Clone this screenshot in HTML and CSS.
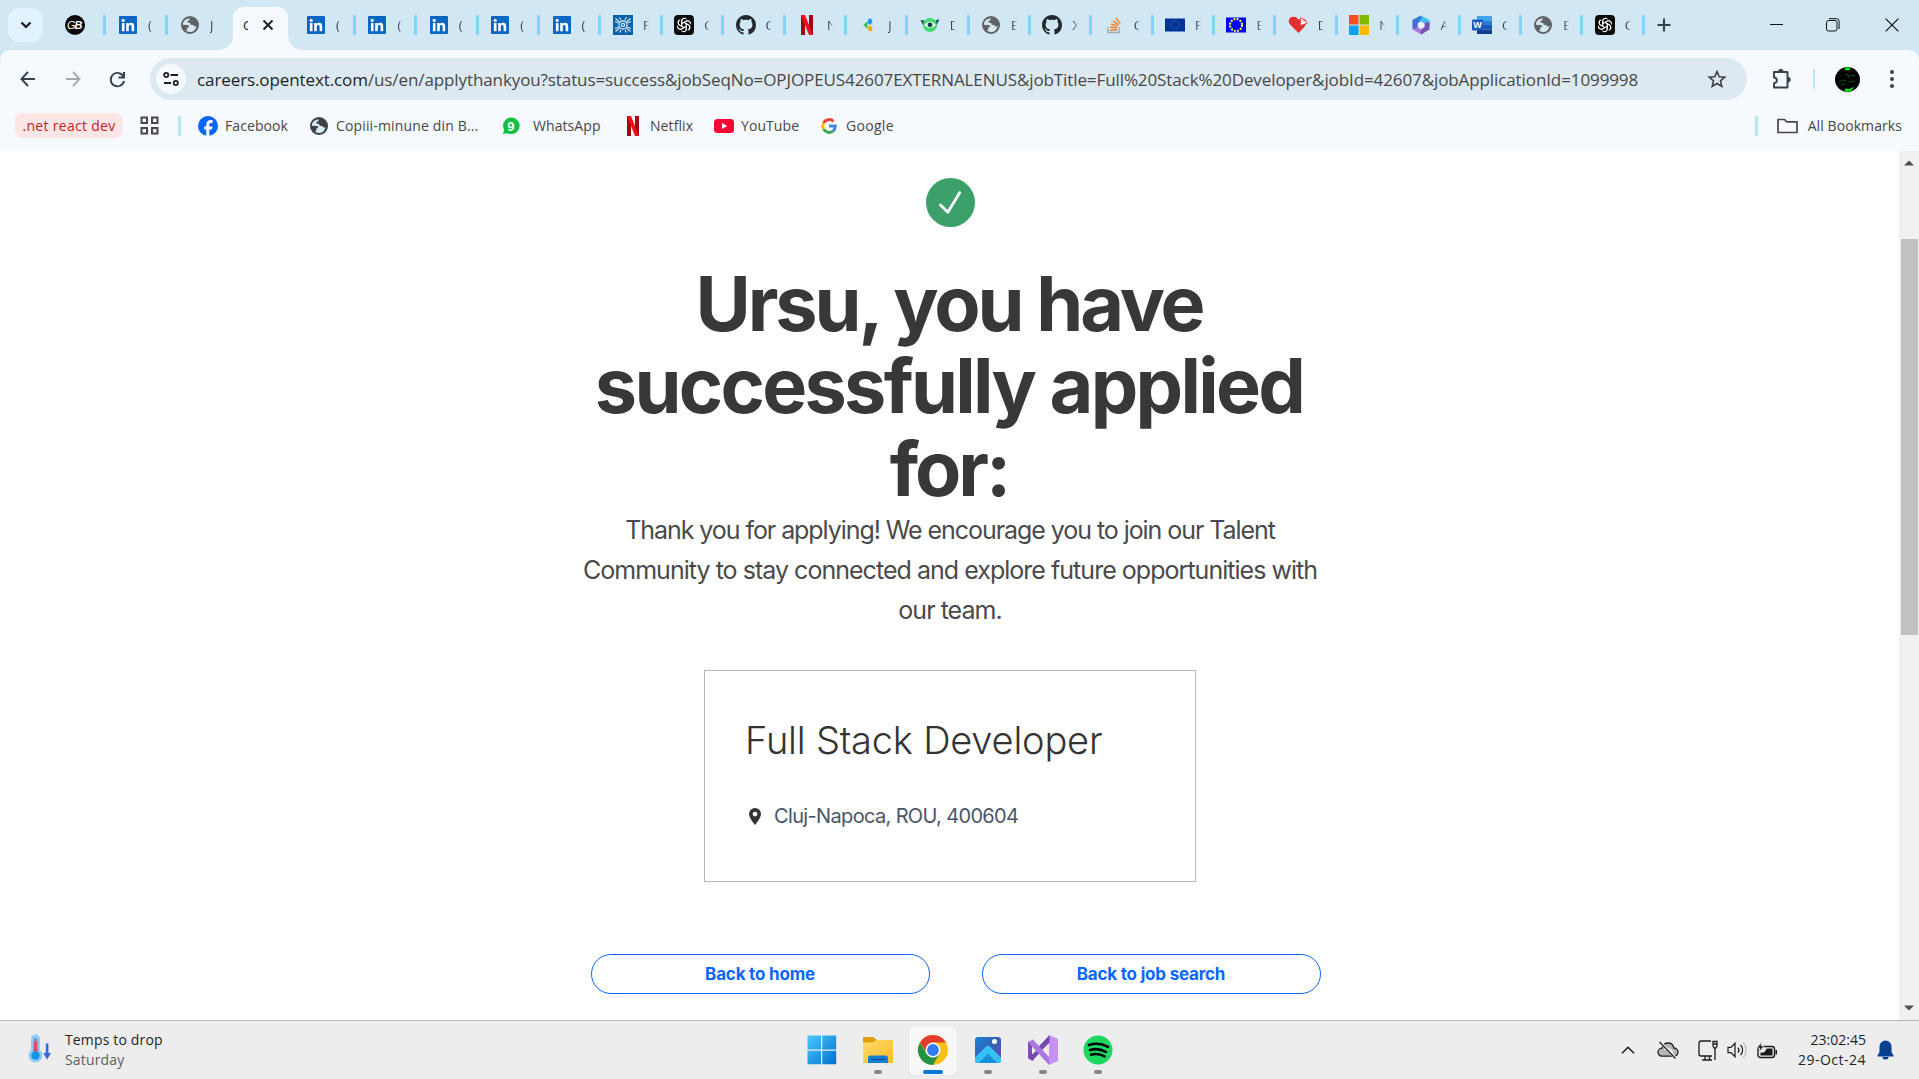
FILE: index.html
```html
<!DOCTYPE html>
<html lang="en">
<head>
<meta charset="utf-8">
<title>Application submitted</title>
<link rel="stylesheet" href="styles.css">
</head>
<body>
<svg class="defs" width="0" height="0" aria-hidden="true">
  <symbol id="linkedin" viewBox="0 0 20 20"><rect x="1" y="1" width="18" height="18" rx="1" fill="#0a66c2"/><circle cx="5.2" cy="5.4" r="1.6" fill="#fff"/><path d="M3.9 8h2.6v8.2H3.9zM8.2 8h2.5v1.2c.5-.9 1.4-1.4 2.5-1.4 2.4 0 3 1.6 3 3.8v4.6h-2.6V12c0-1.100-.1-2-1.300-2s-1.500.9-1.500 2v4.200H8.200z" fill="#fff"/></symbol>
  <symbol id="globe" viewBox="0 0 20 20"><circle cx="10" cy="10" r="9" fill="currentColor"/><path d="M9.500 3.200c-3 .2-5.500 2-6.500 4.700l-.2 1.800 5 .2c1.600.2 1.800 2 .4 2.400l-1 .4v2.600l-1.600.3c2.400 1.900 6 1.900 8.700-.2l2.500-4-2.300.2-1.200-1.500-2.800-.3-.3-1.800-2.700-.5 0-1.700 2-.5z" fill="#d7e8f2"/></symbol>
  <symbol id="gpt" viewBox="0 0 20 20"><rect width="20" height="20" rx="4" fill="#0b0b0b"/><g fill="none" stroke="#fff" stroke-width="1"><path id="petal" d="M7.700 11.300V6.200a2.900 2.900 0 0 1 5-2M7.700 8.700l4.400-2.600a2.900 2.900 0 0 1 4.200 1.700"/><use href="#petal" transform="rotate(60 10 10)"/><use href="#petal" transform="rotate(120 10 10)"/><use href="#petal" transform="rotate(180 10 10)"/><use href="#petal" transform="rotate(240 10 10)"/><use href="#petal" transform="rotate(300 10 10)"/></g></symbol>
  <symbol id="github" viewBox="0 0 16 16"><path fill="#24292f" d="M8 0C3.580 0 0 3.580 0 8c0 3.540 2.290 6.530 5.470 7.590.4.070.55-.17.55-.38 0-.19-.01-.82-.01-1.490-2.010.37-2.530-.49-2.690-.94-.09-.23-.48-.94-.82-1.130-.28-.15-.68-.52-.01-.53.63-.01 1.080.58 1.230.82.72 1.210 1.870.87 2.330.66.07-.52.28-.87.51-1.070-1.780-.2-3.640-.89-3.640-3.950 0-.87.31-1.590.82-2.150-.08-.2-.36-1.020.08-2.120 0 0 .67-.21 2.200.82.64-.18 1.320-.27 2-.27s1.360.09 2 .27c1.530-1.040 2.200-.82 2.200-.82.44 1.100.16 1.920.08 2.120.51.56.82 1.270.82 2.150 0 3.070-1.870 3.750-3.650 3.950.29.25.54.73.54 1.480 0 1.070-.01 1.930-.01 2.200 0 .21.15.46.55.38A8.010 8.010 0 0 0 16 8c0-4.420-3.580-8-8-8z"/></symbol>
  <symbol id="netflix" viewBox="0 0 20 20"><path d="M4 0h4v20H4zM12 0h4v20h-4z" fill="#a3070f"/><path d="M4 0h4l8 20h-4z" fill="#ee0c18"/></symbol>
</svg>

<header class="tabstrip">
  <button class="tab-search"><svg width="12" height="8" viewBox="0 0 12 8"><path d="M1.500 1.500 6 6l4.500-4.500" fill="none" stroke="#111" stroke-width="2.200"/></svg></button>
  <div class="tabs-left">
    <div class="tab pinned"><svg class="fav" viewBox="0 0 20 20"><circle cx="10" cy="10" r="10" fill="#000"/><text x="2" y="14" class="gb-g">G</text><text x="9.500" y="14" class="gb-b">B</text></svg><i></i></div>
    <div class="tab"><svg class="fav"><use href="#linkedin"/></svg><span>(</span><i></i></div>
    <div class="tab"><svg class="fav grey"><use href="#globe"/></svg><span>J</span></div>
  </div>
  <div class="tab-active"><span>C</span><svg width="12" height="12" viewBox="0 0 12 12"><path d="m1.500 1.500 9 9m0-9-9 9" stroke="#1f1f1f" stroke-width="1.900"/></svg></div>
  <div class="tabs">
    <div class="tab"><svg class="fav"><use href="#linkedin"/></svg><span>(</span><i></i></div>
    <div class="tab"><svg class="fav"><use href="#linkedin"/></svg><span>(</span><i></i></div>
    <div class="tab"><svg class="fav"><use href="#linkedin"/></svg><span>(</span><i></i></div>
    <div class="tab"><svg class="fav"><use href="#linkedin"/></svg><span>(</span><i></i></div>
    <div class="tab"><svg class="fav"><use href="#linkedin"/></svg><span>(</span><i></i></div>
    <div class="tab"><svg class="fav" viewBox="0 0 20 20"><rect width="20" height="20" fill="#0a62a9"/><g fill="none" stroke="#cfe6f7" stroke-width="1.300"><circle cx="10" cy="10" r="4"/><circle cx="10" cy="10" r="1.600"/><path d="M2 6.500 5.500 8M6.500 2.500 8 5M2.500 3.500l4 3.500M18 6.500 14.500 8M13.500 2.500 12 5M17.500 3.500l-4 3.500M2 13.500 5.500 12M6.500 17.500 8 15M2.500 16.500l4-3.500M18 13.500 14.500 12M13.500 17.500 12 15M17.500 16.500l-4-3.500"/></g></svg><span>F</span><i></i></div>
    <div class="tab"><svg class="fav"><use href="#gpt"/></svg><span>C</span><i></i></div>
    <div class="tab"><svg class="fav"><use href="#github"/></svg><span>C</span><i></i></div>
    <div class="tab"><svg class="fav"><use href="#netflix"/></svg><span>N</span><i></i></div>
    <div class="tab"><svg class="fav" viewBox="0 0 20 20"><path d="m10.500 3.500 3 .5 1 3-2.500 3-2.500-2z" fill="#1a9af5"/><path d="m9.500 6-4 4 4 4z" fill="#34b56b"/><path d="m10 11.500 3-1 1.500 3-1 3-3-.500z" fill="#ffab12"/></svg><span>J</span><i></i></div>
    <div class="tab"><svg class="fav" viewBox="0 0 20 20"><path d="m.5 5 4 .5-.8 6zM19.500 4l-4 1.500.8 6z" fill="#1f4e5c"/><circle cx="10" cy="10" r="7" fill="#45da70"/><path d="M4 10q6-7 12 0-6 6-12 0z" fill="#e9fbef"/><circle cx="10" cy="9.800" r="2.400" fill="#123c48"/></svg><span>D</span><i></i></div>
    <div class="tab"><svg class="fav grey"><use href="#globe"/></svg><span>E</span><i></i></div>
    <div class="tab"><svg class="fav"><use href="#github"/></svg><span>X</span><i></i></div>
    <div class="tab"><svg class="fav" viewBox="0 0 20 20"><path d="M4 12v5.500h11V12" fill="none" stroke="#a9adb0" stroke-width="1.500"/><path d="M6 15h7M6.200 12.100l6.900.8M7 9l6.500 2.200M9 5.800l5.500 4M12 3l4 5.500" stroke="#f48024" stroke-width="1.500"/></svg><span>C</span><i></i></div>
    <div class="tab"><svg class="fav" viewBox="0 0 20 20"><rect y="3.500" width="20" height="13" fill="#039"/><circle cx="10" cy="10" r="4.300" fill="none" stroke="#77815c" stroke-width="1" stroke-dasharray="1 1.250"/></svg><span>F</span><i></i></div>
    <div class="tab"><svg class="fav" viewBox="0 0 20 20"><rect y="2.500" width="20" height="15" fill="#00f"/><circle cx="10" cy="10" r="6" fill="none" stroke="#ff3" stroke-width="2.100" stroke-dasharray="1.900 1.240"/></svg><span>E</span><i></i></div>
    <div class="tab"><svg class="fav" viewBox="0 0 20 20"><path d="M10.500 18 2 9.500C-1 5 2 1.500 6 1.800c3 .3 4.500 3 4.500 3 2-2 6-2 7.500 1 1 3-.5 4.500-2 6.500z" fill="#e32f2d"/><path d="M12.500 2.500 19.500 8l-7 2.500z" fill="#fff" stroke="#e32f2d" stroke-width=".7"/></svg><span>D</span><i></i></div>
    <div class="tab"><svg class="fav" viewBox="0 0 20 20"><path d="M0 0h9.500v9.500H0z" fill="#f25022"/><path d="M10.500 0H20v9.500h-9.500z" fill="#7fba00"/><path d="M0 10.500h9.500V20H0z" fill="#00a4ef"/><path d="M10.500 10.500H20V20h-9.500z" fill="#ffb900"/></svg><span>N</span><i></i></div>
    <div class="tab"><svg class="fav" viewBox="0 0 20 20"><path d="M10 .5 1.500 5v9.500L7 13V8l4-3z" fill="#4d63cf"/><path d="m10 .5 8.500 4.700V12L13 8.500 8 6z" fill="#43bdf0"/><path d="m1.500 14.500 8.500 5 3-2V13l-3 1-3-2z" fill="#a878e0"/><path d="M18.500 7v7.500l-8.500 5V15l3.500-3.500V8z" fill="#7650b5"/><path d="M10 1 1.500 5.500 4 8l7-4.500z" fill="#2b7fd8"/><path d="m10 6.500 3.300 2v3.600L10 14l-3.300-2V8.500z" fill="#e4f1fa"/></svg><span>A</span><i></i></div>
    <div class="tab"><svg class="fav" viewBox="0 0 20 20"><path d="M5 1h15v5H5z" fill="#41a5ee"/><path d="M5 6h15v4H5z" fill="#2b7cd3"/><path d="M5 10h15v4.500H5z" fill="#185abd"/><path d="M5 14.500h15V19H5z" fill="#103f91"/><rect y="4.500" width="11" height="11" rx="1" fill="#185abd"/><text x="5.500" y="13.200" class="word-w">W</text></svg><span>C</span><i></i></div>
    <div class="tab"><svg class="fav grey"><use href="#globe"/></svg><span>E</span><i></i></div>
    <div class="tab"><svg class="fav"><use href="#gpt"/></svg><span>C</span><i></i></div>
  </div>
  <svg class="new-tab" width="14" height="14" viewBox="0 0 14 14"><path d="M7 .5v13M.5 7h13" stroke="#33424c" stroke-width="2.100"/></svg>
  <div class="win">
    <svg width="13" height="14" viewBox="0 0 13 14"><path d="M0 6.500h13" stroke="#111"/></svg>
    <svg width="14" height="14" viewBox="0 0 14 14" fill="none" stroke="#111"><rect x=".5" y="2.500" width="10.500" height="10.500" rx="2"/><path d="M3 .7h7.500a2.500 2.500 0 0 1 2.600 2.600V11"/></svg>
    <svg width="14" height="14" viewBox="0 0 14 14"><path d="m.6.600 12.800 12.800m0-12.800L.6 13.400" stroke="#111" stroke-width="1.200"/></svg>
  </div>
</header>

<section class="chrome">
  <div class="toolbar">
    <svg class="back" width="16" height="16" viewBox="0 0 16 16" fill="none" stroke="#33424c" stroke-width="1.900"><path d="M15 8H2M8 1 1.500 8 8 15"/></svg>
    <svg class="forward" width="16" height="16" viewBox="0 0 16 16" fill="none" stroke="#a3a9ae" stroke-width="1.900"><path d="M1 8h13M8 1l6.500 7L8 15"/></svg>
    <svg class="reload" width="17" height="17" viewBox="0 0 17 17"><path d="M14.600 6A6.700 6.700 0 1 0 15 10" fill="none" stroke="#33424c" stroke-width="1.900"/><path d="M16 1v6.500H9.500V5.600h4.500V1z" fill="#33424c"/></svg>
    <div class="omnibox">
      <span class="site-info"><svg width="16" height="14" viewBox="0 0 16 14" fill="none" stroke="#1f1f1f" stroke-width="1.800"><circle cx="3.200" cy="3" r="2.100"/><path d="M7.500 3H15M1 11h7"/><circle cx="12.800" cy="11" r="2.100"/></svg></span>
      <span class="url"><b>careers.opentext.com</b>/us/en/applythankyou?status=success&amp;jobSeqNo=OPJOPEUS42607EXTERNALENUS&amp;jobTitle=Full%20Stack%20Developer&amp;jobId=42607&amp;jobApplicationId=1099998</span>
      <svg class="star" width="20" height="20" viewBox="0 0 20 20"><path d="m10 2.500 2.200 5.200 5.600.5-4.300 3.700 1.300 5.500L10 14.500l-4.800 2.900 1.300-5.500L2.200 8.200l5.600-.5z" fill="none" stroke="#3c4043" stroke-width="1.600"/></svg>
    </div>
    <svg class="puzzle" width="22" height="22" viewBox="0 0 22 22"><path d="M3 4h13.500v15.500H3v-4.300a2.600 2.600 0 0 0 0-5.700z" fill="none" stroke="#33424c" stroke-width="1.900" stroke-linejoin="round"/><path d="M7.500 3.500a2.300 2.300 0 0 1 4.600 0zM17 9.300a2.400 2.400 0 0 1 0 4.800z" fill="#33424c" stroke="#33424c" stroke-width=".8"/></svg>
    <i class="line"></i>
    <svg class="avatar" width="25" height="25" viewBox="0 0 25 25"><circle cx="12.500" cy="12.500" r="12.500"/><path d="M9.500.5h6l-1 2.500-4 .5zM9 24.300l2-3 3 1 5-2.500-2.500 4-4 1z" fill="#0e1"/><path d="m4 15 4-2 3 1M12 10l6-2 2 1M14 15l6-1M6 18l4-1M10 7l4 1" stroke="#0a5310" fill="none"/></svg>
    <svg class="kebab" width="4" height="18" viewBox="0 0 4 18" fill="#33424c"><circle cx="2" cy="2" r="2"/><circle cx="2" cy="9" r="2"/><circle cx="2" cy="16" r="2"/></svg>
  </div>
  <nav class="bookmarks">
    <span class="group">.net react dev</span>
    <svg class="apps" width="19" height="19" viewBox="0 0 19 19" fill="none" stroke="#474747" stroke-width="2"><path d="M1.500 1.500h5.500v5.500H1.500zM12 1.500h5.500v5.500H12zM1.500 12h5.500v5.500H1.500zM12 12h5.500v5.500H12z"/></svg>
    <i class="line"></i>
    <a class="bm-fb"><svg width="20" height="20" viewBox="0 0 20 20"><circle cx="10" cy="10" r="10" fill="#0866ff"/><path d="M8.300 20v-6.500H6.200v-3h2.100V9c0-3.400 1.500-5 4.800-5 .6 0 1.200.1 1.500.2V7c-.3 0-.7-.1-1.200-.1-1.500 0-2.100.6-2.100 2.100v1.500h3.100l-.5 3h-2.600V20z" fill="#fff"/></svg><span>Facebook</span></a>
    <a class="bm-cp"><svg class="dark" width="20" height="20"><use href="#globe"/></svg><span>Copiii-minune din B...</span></a>
    <a class="bm-wa"><svg width="20" height="20" viewBox="0 0 20 20"><circle cx="10.300" cy="9.800" r="8.300" fill="#0cc143"/><path d="m2 18 1.500-6 4 5z" fill="#0cc143"/><text x="10" y="14.500" class="wa-n">9</text></svg><span>WhatsApp</span></a>
    <a class="bm-nf"><svg width="20" height="20"><use href="#netflix"/></svg><span>Netflix</span></a>
    <a class="bm-yt"><svg width="20" height="14" viewBox="0 0 20 14"><rect width="20" height="14" rx="3.500" fill="#f03"/><path d="m8 4 5.200 3L8 10z" fill="#fff"/></svg><span>YouTube</span></a>
    <a class="bm-go"><svg width="20" height="20" viewBox="0 0 20 20"><circle cx="10" cy="10" r="10" fill="#fff"/><g fill="none" stroke-width="3"><path d="M14.500 5.400A6.300 6.300 0 0 0 4.600 6.900" stroke="#ea4335"/><path d="M4.600 6.900a6.300 6.300 0 0 0 0 6.200" stroke="#fbbc05"/><path d="M4.600 13.100a6.300 6.300 0 0 0 9.400 2" stroke="#34a853"/><path d="M10 10h6.300c0 2-.8 3.900-2.300 5.100" stroke="#4285f4"/></g></svg><span class="go">Google</span></a>
    <div class="all"><i class="line"></i><svg width="21" height="16" viewBox="0 0 21 16"><path d="M1 1.500h6.500l2 2.300H20v10.700H1z" fill="none" stroke="#474747" stroke-width="1.700" stroke-linejoin="round"/></svg><span>All Bookmarks</span></div>
  </nav>
</section>

<div class="viewport">
  <main class="page">
    <svg class="ok" width="49" height="49" viewBox="0 0 49 49"><circle cx="24.500" cy="24.500" r="24.500" fill="#3ba069"/><path d="m14.500 27 7.300 7.200L33.700 14.800" fill="none" stroke="#fff" stroke-width="2.800" stroke-linecap="round" stroke-linejoin="round"/></svg>
    <h1><span class="tight">Ursu, you have</span><br>successfully applied<br><span class="tight">for:</span></h1>
    <p class="thanks"><span class="first">Thank you for applying! We encourage you to join our Talent</span><br>Community to stay connected and explore future opportunities with<br>our team.</p>
    <section class="card">
      <h2>Full Stack Developer</h2>
      <div class="loc"><svg width="12" height="17" viewBox="0 0 12 17"><path fill-rule="evenodd" d="M6 0a6 6 0 0 1 6 6c0 4-6 11-6 11S0 10 0 6a6 6 0 0 1 6-6zm0 3.700a2.400 2.400 0 1 0 0 4.800 2.400 2.400 0 0 0 0-4.800z" fill="#333"/></svg><span>Cluj-Napoca, ROU, 400604</span></div>
    </section>
    <div class="actions"><button>Back to home</button><button>Back to job search</button></div>
  </main>
  <aside class="scroll">
    <svg width="10" height="6" viewBox="0 0 10 6"><path d="M0 5.500 5 .5l5 5z" fill="#505050"/></svg>
    <div class="track"><div class="thumb"></div></div>
    <svg width="10" height="6" viewBox="0 0 10 6"><path d="m0 .5 5 5 5-5z" fill="#505050"/></svg>
  </aside>
</div>

<footer class="taskbar">
  <div class="weather">
    <svg width="24" height="30" viewBox="0 0 24 30"><path d="M3 5a4.500 4.500 0 0 1 9 0v11a7 7 0 1 1-9 0z" fill="#8fcbf8"/><rect x="5.700" y="4" width="3.700" height="16" rx="1.800" fill="#7c95b5"/><rect x="5.700" y="7.500" width="3.700" height="12" fill="#ef4565"/><circle cx="7.500" cy="21.500" r="4.200" fill="#1593e6"/><path d="M17.800 9.500h2.600V19h2.600l-3.900 6.500L15.200 19h2.600z" fill="#3667e0"/></svg>
    <div><div>Temps to drop</div><div class="day">Saturday</div></div>
  </div>
  <div class="dock">
    <div class="app start"><svg width="30" height="30" viewBox="0 0 30 30"><defs><linearGradient id="win" x1="0" y1="0" x2="1" y2="1"><stop offset="0" stop-color="#4cc9fb"/><stop offset="1" stop-color="#0070d2"/></linearGradient></defs><path d="M.5.500H14v14H.5zM15.200.5h14v14h-14zM.5 15.700H14v13.500H.5zM15.200 15.700h14v13.500h-14z" fill="url(#win)"/></svg></div>
    <div class="app run"><svg width="30" height="30" viewBox="0 0 30 30"><defs><linearGradient id="fold" x1="0" y1="0" x2="1" y2="1"><stop offset="0" stop-color="#ffdc6b"/><stop offset="1" stop-color="#fbbb24"/></linearGradient></defs><path d="M0 3a1 1 0 0 1 1-1h9l4 3-4 4H0z" fill="#dfa00a"/><path d="M0 7.500h10L13 5h17v22a1 1 0 0 1-1 1H1a1 1 0 0 1-1-1z" fill="url(#fold)"/><path d="M5 28v-5a2.500 2.500 0 0 1 2.500-2.500h15A2.500 2.500 0 0 1 25 23v5z" fill="#127fd4"/><path d="M8 24.500h14" stroke="#0b4a94" stroke-width="1.200"/></svg></div>
    <div class="app on"><svg width="30" height="30" viewBox="0 0 30 30"><circle cx="15" cy="15" r="15" fill="#fbc116"/><path d="M2 7.500A15 15 0 0 1 28 7.500H15L9 18z" fill="#e33b2e"/><path d="M2 7.500A15 15 0 0 0 15 30l6.500-11.200L15 15 8.500 18.700z" fill="#229342"/><circle cx="15" cy="15" r="7.500" fill="#fff"/><circle cx="15" cy="15" r="5.900" fill="#357af0"/></svg></div>
    <div class="app run"><svg width="30" height="30" viewBox="0 0 30 30"><defs><linearGradient id="ph" x1="0" y1="0" x2="1" y2="1"><stop offset="0" stop-color="#1683d8"/><stop offset=".6" stop-color="#3d5bb1"/><stop offset="1" stop-color="#7a4fae"/></linearGradient></defs><rect x="2" y="2" width="26" height="26" rx="3" fill="url(#ph)"/><path d="M2 22.500 12.500 12a3.500 3.500 0 0 1 5 0L28 22.500V25a3 3 0 0 1-3 3h-1L15 19l-9 9H5a3 3 0 0 1-3-3z" fill="#35c1f4"/><path d="m6 28 9-9 9 9z" fill="#1590dc"/><circle cx="21.500" cy="6.500" r="2.500" fill="#fff"/></svg></div>
    <div class="app run"><svg width="30" height="30" viewBox="0 0 30 30"><path d="M21 0v30l9-4V4z" fill="#c792f5"/><path d="M0 7v16l4.500 3L6 24V6z" fill="#7d4fb5"/><path d="m4.500 25.500 17-18V0L0 23z" fill="#7447ac"/><path d="m4 11 4.500 4.500L4 19.500zM21 9v12l-7-6z" fill="#ededed"/><path d="M0 7 5 4.500 21 22v8z" fill="#a878e0"/></svg></div>
    <div class="app run"><svg width="30" height="30" viewBox="0 0 30 30"><circle cx="15" cy="15" r="14.500" fill="#1ed760"/><path d="M6 10c6-2 13.500-1.300 19 1.800M7 15c5-1.500 11-.9 16 2M8 19.700c4.500-1.200 9.500-.6 13.500 1.700" fill="none" stroke="#000" stroke-width="2.600" stroke-linecap="round"/></svg></div>
  </div>
  <div class="tray">
    <svg class="t-up" width="14" height="8" viewBox="0 0 14 8"><path d="M1 7.200 7 1.200l6 6" fill="none" stroke="#1b1b1b" stroke-width="1.500"/></svg>
    <svg class="t-cloud" width="22" height="18" viewBox="0 0 22 18"><path d="M5 15.200a4 4 0 0 1 0-8c1-3.500 3-5.200 6-5.200s5.300 2 5.800 5a4 4 0 0 1 .2 8.200z" fill="#b5b5b5" stroke="#222" stroke-width="1.300"/><path d="M7 8c3-1 6 0 9 3" stroke="#eee" stroke-width="2" fill="none"/><path d="m3 1 16 16.500" stroke="#ededed" stroke-width="3"/><path d="m2.500 1 16 16.500" stroke="#222" stroke-width="1.300"/></svg>
    <svg class="t-net" width="20" height="21" viewBox="0 0 20 21" fill="none" stroke="#1b1b1b" stroke-width="1.300"><path d="M13 1H3a2 2 0 0 0-2 2v11a2 2 0 0 0 2 2h11M4 20h10M7 16v4M11.500 16v4M15 1.500h4V6l-1.300 2h-1.500L15 6zM17 8v12M15 4h4"/></svg>
    <svg class="t-vol" width="20" height="18" viewBox="0 0 20 18" fill="none" stroke="#1b1b1b" stroke-width="1.200"><path d="M1 6.300h3l4-4v13.400l-4-4H1zM11 6.500a4 4 0 0 1 0 5M13.500 4a7 7 0 0 1 0 10"/><path d="M16 1.500a10.500 10.500 0 0 1 0 15" stroke="#bdbdbd"/></svg>
    <svg class="t-bat" width="21" height="17" viewBox="0 0 21 17"><rect x="1" y="4.500" width="16.500" height="11" rx="2.500" fill="none" stroke="#1b1b1b" stroke-width="1.400"/><path d="M3.500 10.500h3.500L10 6.500h5.500V13.500h-12zM18.500 8h1.500v4.500h-1.500z" fill="#1b1b1b"/><path d="M4.500 0 0 6h3L2 10l5-6H4z" fill="#1b1b1b" stroke="#ededed" stroke-width=".6"/></svg>
    <div class="clock"><div>23:02:45</div><div class="date">29-Oct-24</div></div>
    <svg class="t-bell" width="17" height="20" viewBox="0 0 17 20"><path d="M8.500.5a6 6 0 0 1 6 6v5.500l2 3.500v1H.5v-1l2-3.500V6.500a6 6 0 0 1 6-6zM5.500 17h6a3 2.500 0 0 1-6 0z" fill="#063f8f"/></svg>
  </div>
</footer>
</body>
</html>
```
FILE: styles.css
```css
* { box-sizing: border-box; }
body { margin: 0; width: 1919px; height: 1079px; overflow: hidden; display: flex; flex-direction: column; background: #fff; font-family: "Open Sans", "Noto Sans", sans-serif; color: #1f1f1f; }
svg { display: block; flex: none; overflow: visible; }
button { font: inherit; border: 0; padding: 0; background: none; }
.defs { position: absolute; }

/* Tab strip */
.tabstrip { height: 50px; flex: none; display: flex; align-items: center; background: #d1e7f3; }
.tab-search { width: 35px; height: 34px; margin-left: 8px; border-radius: 11px; background: #e1f3fe; display: flex; align-items: center; justify-content: center; }
.tabs-left { display: flex; margin-left: 1px; width: 187px; }
.tab { width: 61.36px; height: 50px; flex: none; display: flex; align-items: center; padding-left: 11.4px; }
.tabs-left .tab { width: 62px; padding-left: 12px; }
.tabs-left .pinned { padding-left: 21px; }
.fav { width: 20px; height: 20px; }
.grey { color: #5f6368; }
.dark { color: #3c4043; }
.tab span { width: 8px; margin-left: 10px; overflow: hidden; font-size: 13px; color: #33424c; -webkit-mask-image: linear-gradient(90deg, #000 20%, transparent 75%); mask-image: linear-gradient(90deg, #000 20%, transparent 75%); }
.tab i { width: 3px; height: 20px; margin-left: auto; border-radius: 1px; background: #84d3f8; }
.tab-active { position: relative; align-self: flex-end; width: 55px; height: 43px; margin-left: 2px; padding: 0 14px 7px 10px; border-radius: 11px 11px 0 0; background: #f6f9fe; display: flex; align-items: center; justify-content: space-between; font-size: 13px; }
.tab-active span { width: 5px; overflow: hidden; }
.tab-active::before, .tab-active::after { content: ""; position: absolute; bottom: 0; width: 14px; height: 14px; }
.tab-active::before { left: -14px; background: radial-gradient(circle at 0 0, transparent 13.5px, #f6f9fe 14px); }
.tab-active::after { right: -14px; background: radial-gradient(circle at 100% 0, transparent 13.5px, #f6f9fe 14px); }
.tabs { display: flex; margin-left: 6.7px; }
.new-tab { margin-left: 12px; }
.win { margin-left: auto; margin-right: 20px; display: flex; align-items: center; gap: 43px; }
.win svg:last-child { margin-left: 2px; }
.gb-g, .gb-b { font: italic 11px "Liberation Sans", sans-serif; fill: #fff; }
.gb-b { font-weight: 700; }
.word-w { font: 700 9px "Liberation Sans", sans-serif; fill: #fff; text-anchor: middle; }
.wa-n { font: 700 13px "Liberation Sans", sans-serif; fill: #fff; text-anchor: middle; }

/* Toolbar and bookmarks */
.chrome { flex: none; height: 101px; background: #f6f9fe; border-radius: 10px 10px 0 0; box-shadow: 0 -10px 0 10px #d1e7f3; clip-path: inset(0); position: relative; }
.toolbar { height: 58px; display: flex; align-items: center; }
.back { margin-left: 20px; }
.forward { margin-left: 29px; }
.reload { margin-left: 28px; }
.omnibox { width: 1597px; height: 42px; margin-left: 24px; border-radius: 21px; background: #dde9f1; display: flex; align-items: center; padding-left: 6px; }
.site-info { width: 30px; height: 30px; border-radius: 50%; background: #f6f9fe; display: flex; align-items: center; justify-content: center; }
.url { margin-left: 11px; font-size: 17px; letter-spacing: -0.1px; white-space: nowrap; color: #474747; }
.url b { font-weight: 400; color: #1f1f1f; }
.star { margin-left: auto; margin-right: 20px; }
.puzzle { margin-left: 24px; }
.line { flex: none; width: 2px; height: 20px; background: #b9e4fc; }
.puzzle + .line { margin-left: 20px; }
.avatar { margin-left: 20px; }
.kebab { margin-left: 30px; }

.bookmarks { height: 35px; display: flex; align-items: center; font-size: 14px; color: #474747; white-space: nowrap; letter-spacing: .08px; }
.bookmarks .line { width: 3px; }
.group { width: 108px; height: 25px; margin-left: 15px; border-radius: 8px; background: #fbe6e5; color: #c5221f; text-align: center; line-height: 25px; letter-spacing: .3px; }
.apps { margin-left: 17px; }
.apps + .line { margin-left: 19px; }
.bookmarks a { display: flex; align-items: center; gap: 7px; }
.bm-fb { width: 111px; margin-left: 17px; }
.bm-cp { width: 192px; letter-spacing: .15px; }
.bookmarks .bm-wa { width: 122px; gap: 12px; }
.bm-nf { width: 91px; }
.bm-yt { width: 105px; }
.go { letter-spacing: .3px; }
.all { margin-left: auto; margin-right: 17px; display: flex; align-items: center; }
.all svg { margin: 0 10px 0 19px; }

/* Page */
.viewport { height: 869px; flex: none; display: flex; }
.page { flex: 1; display: flex; flex-direction: column; align-items: center; font-family: Inter, sans-serif; padding: 27px 0 0 1px; }
h1 { margin: 35.5px 0 0; padding-right: 2px; font-size: 75.5px; line-height: 82.5px; letter-spacing: -2.7px; font-weight: 700; text-align: center; color: #383838; }
.tight { letter-spacing: -3.05px; }
.thanks { margin: 0; font-size: 25px; line-height: 40px; letter-spacing: -.97px; text-align: center; color: #4a4a4a; font-weight: 375; }
.first { letter-spacing: -1.06px; }
.card { width: 492px; height: 212px; margin-top: 40px; padding: 40px; border: 1px solid #b9b9b9; }
h2 { margin: 0; font-size: 38px; line-height: 58px; letter-spacing: -.2px; font-weight: 300; color: #333; white-space: nowrap; }
.loc { margin-top: 32px; display: flex; align-items: center; gap: 13px; padding-left: 4px; font-size: 20px; line-height: 30px; letter-spacing: -.65px; color: #4a5568; }
.actions { margin-top: 72px; margin-left: 11px; display: flex; gap: 52px; }
.actions button { width: 339px; height: 40px; border: 1px solid #0a66ff; border-radius: 20px; color: #0a66ff; font-weight: 700; font-size: 17px; letter-spacing: -.2px; }
.scroll { width: 20px; background: #f1f1f1; display: flex; flex-direction: column; align-items: center; padding: 9px 0; }
.track { flex: 1; padding-top: 73px; }
.thumb { width: 17px; height: 396px; background: #c1c1c1; }

/* Taskbar */
.taskbar { height: 59px; flex: none; background: #ededed; border-top: 1px solid #b9b9b9; display: flex; }
.weather { width: 804px; padding: 9px 0 0 28px; display: flex; gap: 13px; font-size: 14px; line-height: 20px; letter-spacing: .15px; }
.weather svg { margin-top: 4px; }
.day { color: #5f5f5f; }
.dock { display: flex; gap: 7px; margin-top: 5px; margin-left: -5px; }
.app { width: 48px; height: 49px; border-radius: 5px; padding-top: 9px; display: flex; flex-direction: column; align-items: center; }
.app::after { content: ""; height: 4px; width: 0; margin-top: 5px; border-radius: 2px; }
.start { margin: 0 1px 0 -1px; }
.run::after { width: 8px; background: #868686; }
.on { background: #f7f7f7; box-shadow: 0 0 1px #bbb; }
.on::after { width: 20px; background: #0078d4; }
.tray { margin-left: auto; display: flex; align-items: center; font-size: 14px; }
.t-cloud { margin-left: 22px; }
.t-net { margin-left: 19px; }
.t-vol { margin-left: 9px; }
.t-bat { margin-left: 10px; }
.clock { text-align: right; line-height: 20px; width: 88px; }
.date { letter-spacing: .5px; }
.t-bell { margin-left: 11px; margin-right: 25px; }
```
